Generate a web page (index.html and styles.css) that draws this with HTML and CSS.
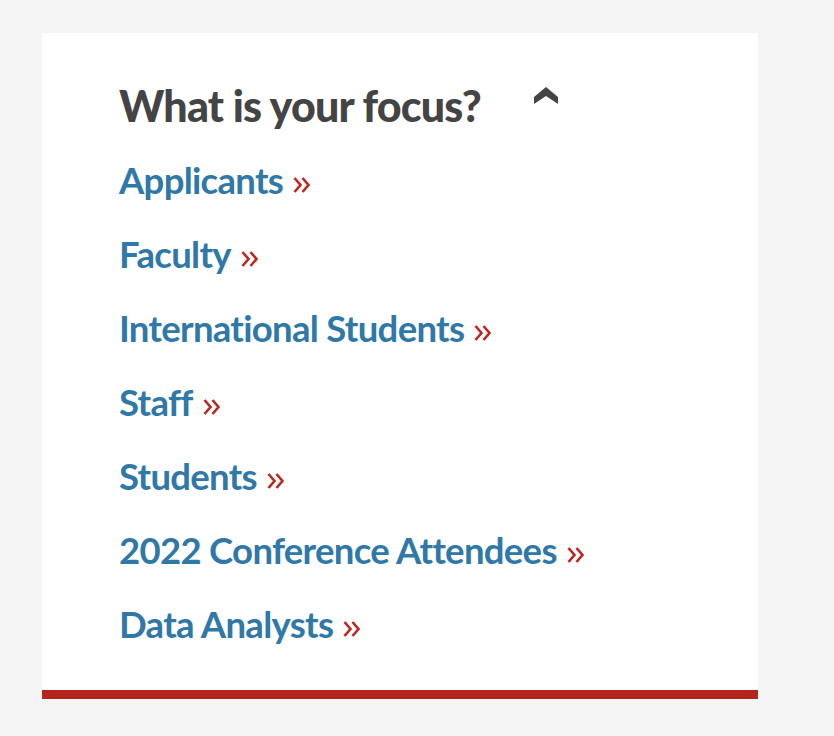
FILE: index.html
```html
<!DOCTYPE html>
<html lang="en">
<head>
<meta charset="utf-8">
<title>What is your focus?</title>
<link rel="stylesheet" href="styles.css">
</head>
<body>
<section class="focus-card">
  <div class="focus-header">
    <h2 class="focus-title">What is your focus?</h2>
    <svg class="toggle-icon" width="24" height="18" viewBox="0 0 24 18" aria-hidden="true">
      <polygon points="0,10 12,0 24,10 24,17 12,9 0,17" fill="#444444"/>
    </svg>
  </div>
  <ul class="focus-list">
    <li><a href="#">Applicants<svg class="raquo" width="17" height="16" viewBox="0 0 17 16" aria-hidden="true"><polyline points="1.5,1 7.5,8 1.5,15"/><polyline points="9.5,1 15.5,8 9.5,15"/></svg></a></li>
    <li><a href="#">Faculty<svg class="raquo" width="17" height="16" viewBox="0 0 17 16" aria-hidden="true"><polyline points="1.5,1 7.5,8 1.5,15"/><polyline points="9.5,1 15.5,8 9.5,15"/></svg></a></li>
    <li><a href="#">International Students<svg class="raquo" width="17" height="16" viewBox="0 0 17 16" aria-hidden="true"><polyline points="1.5,1 7.5,8 1.5,15"/><polyline points="9.5,1 15.5,8 9.5,15"/></svg></a></li>
    <li><a href="#">Staff<svg class="raquo" width="17" height="16" viewBox="0 0 17 16" aria-hidden="true"><polyline points="1.5,1 7.5,8 1.5,15"/><polyline points="9.5,1 15.5,8 9.5,15"/></svg></a></li>
    <li><a href="#">Students<svg class="raquo" width="17" height="16" viewBox="0 0 17 16" aria-hidden="true"><polyline points="1.5,1 7.5,8 1.5,15"/><polyline points="9.5,1 15.5,8 9.5,15"/></svg></a></li>
    <li><a href="#">2022 Conference Attendees<svg class="raquo" width="17" height="16" viewBox="0 0 17 16" aria-hidden="true"><polyline points="1.5,1 7.5,8 1.5,15"/><polyline points="9.5,1 15.5,8 9.5,15"/></svg></a></li>
    <li><a href="#">Data Analysts<svg class="raquo" width="17" height="16" viewBox="0 0 17 16" aria-hidden="true"><polyline points="1.5,1 7.5,8 1.5,15"/><polyline points="9.5,1 15.5,8 9.5,15"/></svg></a></li>
  </ul>
</section>
</body>
</html>
```

FILE: styles.css
```css
html, body {
  margin: 0;
  padding: 0;
}

body {
  background: #f5f5f5;
  padding: 33px 0 0 42px;
  font-family: "Lato", "Open Sans", sans-serif;
  font-weight: 700;
}

.focus-card {
  width: 716px;
  box-sizing: border-box;
  background: #ffffff;
  border-bottom: 9px solid #b5231f;
  padding: 36px 0 29px 77px;
}

.focus-header {
  display: flex;
  align-items: center;
  justify-content: space-between;
  width: 439px;
  height: 74px;
}

.focus-title {
  margin: 0;
  font-size: 43px;
  line-height: 74px;
  font-weight: 900;
  color: #444444;
  letter-spacing: -0.8px;
}

.toggle-icon {
  display: block;
  margin-bottom: 21px;
}

.focus-list {
  list-style: none;
  margin: 0;
  padding: 0;
}

.focus-list li {
  height: 74px;
  line-height: 74px;
}

.focus-list a {
  color: #2f78a7;
  text-decoration: none;
  font-size: 36.5px;
  letter-spacing: -0.7px;
}

.raquo {
  margin-left: 10px;
  vertical-align: 1px;
  fill: none;
  stroke: #c0241f;
  stroke-width: 2.6;
}
```
